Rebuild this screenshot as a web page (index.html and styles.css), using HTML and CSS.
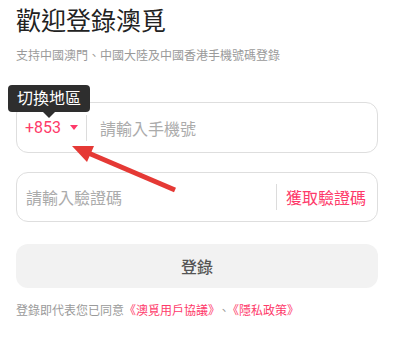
FILE: index.html
```html
<!DOCTYPE html>
<html lang="zh-Hant">
<head>
<meta charset="utf-8">
<link rel="stylesheet" href="styles.css">
</head>
<body>
<div class="page">
  <h1 class="title">歡迎登錄澳覓</h1>
  <p class="subtitle">支持中國澳門、中國大陸及中國香港手機號碼登錄</p>

  <div class="field phone">
    <div class="area">
      <span class="code">+853</span>
      <span class="caret"></span>
    </div>
    <span class="divider"></span>
    <span class="placeholder">請輸入手機號</span>
  </div>

  <div class="field verify">
    <span class="placeholder grow">請輸入驗證碼</span>
    <span class="divider"></span>
    <span class="get-code">獲取驗證碼</span>
  </div>

  <div class="login-btn">登錄</div>

  <p class="terms">登錄即代表您已同意<span class="link">《澳覓用戶協議》</span><span class="sep">、</span><span class="link">《隱私政策》</span></p>

  <div class="tooltip">切換地區</div>

  <svg class="arrow" width="400" height="342" viewBox="0 0 400 342">
    <line x1="175" y1="190" x2="86" y2="152" stroke="#e53935" stroke-width="5" stroke-linecap="butt"/>
    <polygon points="72,146 94,146 87,162" fill="#e53935"/>
  </svg>
</div>
</body>
</html>
```

FILE: styles.css
```css
* { box-sizing: border-box; }
html, body {
  margin: 0;
  padding: 0;
  background: #fff;
}
body {
  font-family: "Noto Sans", "Noto Sans CJK TC", sans-serif;
  width: 400px;
  height: 342px;
  overflow: hidden;
}
.page {
  position: relative;
  padding: 4px 22px 0 16px;
}
.title {
  margin: 0;
  font-size: 25px;
  line-height: 32px;
  font-weight: 400;
  color: #222;
}
.subtitle {
  margin: 10px 0 0;
  font-size: 12px;
  line-height: 20px;
  color: #9a9a9a;
}
.field {
  display: flex;
  align-items: center;
  height: 51px;
  border: 1px solid #dedede;
  border-radius: 12px;
  font-size: 16px;
}
.phone {
  margin-top: 36px;
  padding-left: 8px;
}
.verify {
  margin-top: 19px;
  padding: 0 11px 0 9px;
  height: 50px;
}
.area {
  display: flex;
  align-items: center;
  width: 61px;
}
.code {
  color: #fe3a6a;
  font-family: "Roboto", "Noto Sans", sans-serif;
  font-size: 16px;
}
.caret {
  margin-left: 9px;
  width: 0;
  height: 0;
  border-left: 4px solid transparent;
  border-right: 4px solid transparent;
  border-top: 5px solid #fe3a6a;
}
.divider {
  width: 1px;
  height: 26px;
  background: #dcdcdc;
}
.phone .divider { margin-right: 13px; }
.verify .divider { margin-right: 9px; }
.placeholder {
  color: #ababab;
}
.grow { flex: 1; }
.get-code {
  color: #fe3a6a;
}
.login-btn {
  margin-top: 22px;
  height: 44px;
  border-radius: 12px;
  background: #f2f2f2;
  color: #555;
  font-size: 16px;
  font-weight: 500;
  display: flex;
  align-items: center;
  justify-content: center;
}
.terms {
  margin: 13px 0 0;
  font-size: 12px;
  line-height: 20px;
  color: #9a9a9a;
}
.link { color: #fe3a6a; }
.sep {
  margin: 0 3px 0 4px;
}
.tooltip {
  position: absolute;
  left: 8px;
  top: 85px;
  width: 82px;
  height: 27px;
  background: #2e2e2e;
  border-radius: 4px;
  color: #fff;
  font-size: 16px;
  line-height: 27px;
  text-align: center;
}
.tooltip::after {
  content: "";
  position: absolute;
  left: 35px;
  top: 27px;
  border-left: 6px solid transparent;
  border-right: 6px solid transparent;
  border-top: 6px solid #2e2e2e;
}
.arrow {
  position: absolute;
  left: 0;
  top: 0;
  pointer-events: none;
}
```
